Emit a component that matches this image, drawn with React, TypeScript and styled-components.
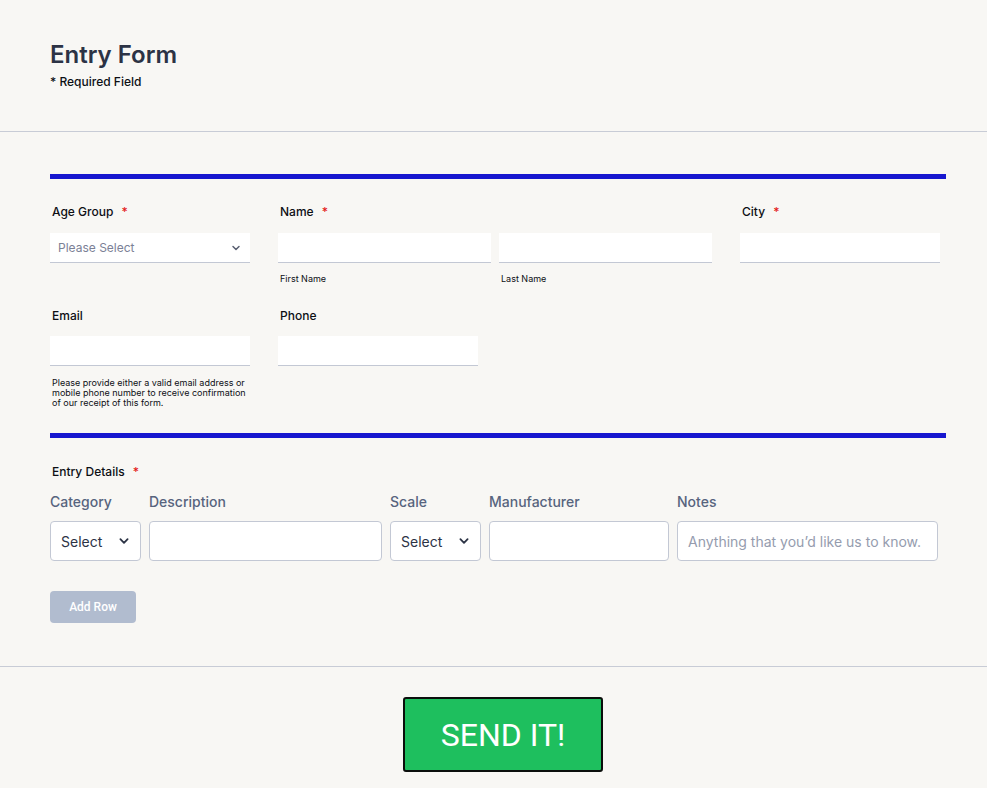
import styled, { createGlobalStyle } from "styled-components";

const GlobalStyle = createGlobalStyle`
  html, body {
    margin: 0;
    padding: 0;
    background: #f8f7f4;
  }
  body {
    font-family: Inter, "Noto Sans", sans-serif;
    color: #2c3345;
  }
  * {
    box-sizing: border-box;
  }
`;

const columns = [
  { label: "Category", width: 91, kind: "select" },
  { label: "Description", width: 233, kind: "text" },
  { label: "Scale", width: 91, kind: "select" },
  { label: "Manufacturer", width: 180, kind: "text" },
  { label: "Notes", width: 261, kind: "notes" },
];

const Chevron = ({ size = 10 }: { size?: number }) => (
  <svg width={size} height={size} viewBox="0 0 10 10" fill="none">
    <path d="M2 3.5 L5 6.5 L8 3.5" stroke="currentColor" strokeWidth="1.5" strokeLinecap="round" strokeLinejoin="round" />
  </svg>
);

const App = () => {
  return (
    <Page>
      <GlobalStyle />
      <Header>
        <Title>Entry Form</Title>
        <Subtitle>* Required Field</Subtitle>
      </Header>

      <FormBody>
        <SectionBar />
        <FieldRow>
          <Field $width={200}>
            <Label>
              Age Group <Star>*</Star>
            </Label>
            <FlatSelect>
              <span>Please Select</span>
              <Chevron />
            </FlatSelect>
          </Field>
          <Field $width={434}>
            <Label>
              Name <Star>*</Star>
            </Label>
            <NamePair>
              <div>
                <FlatInput />
                <SubLabel>First Name</SubLabel>
              </div>
              <div>
                <FlatInput />
                <SubLabel>Last Name</SubLabel>
              </div>
            </NamePair>
          </Field>
          <Field $width={200}>
            <Label>
              City <Star>*</Star>
            </Label>
            <FlatInput />
          </Field>
        </FieldRow>

        <FieldRow $top={23}>
          <Field $width={200}>
            <Label $gap={12}>Email</Label>
            <FlatInput />
            <HelpText>
              Please provide either a valid email address or mobile phone number to receive confirmation of our
              receipt of this form.
            </HelpText>
          </Field>
          <Field $width={200}>
            <Label $gap={12}>Phone</Label>
            <FlatInput />
          </Field>
        </FieldRow>

        <SectionBar $top={25} />

        <Label $top={26}>
          Entry Details <Star>*</Star>
        </Label>
        <Table>
          {columns.map((col) => (
            <Column key={col.label} $width={col.width}>
              <ColumnHead>{col.label}</ColumnHead>
              {col.kind === "select" ? (
                <BoxSelect>
                  <span>Select</span>
                  <Chevron size={12} />
                </BoxSelect>
              ) : (
                <BoxInput>{col.kind === "notes" && <Placeholder>Anything that you’d like us to know.</Placeholder>}</BoxInput>
              )}
            </Column>
          ))}
        </Table>
        <AddRowButton>Add Row</AddRowButton>
      </FormBody>

      <Footer>
        <SendButton>SEND IT!</SendButton>
      </Footer>
    </Page>
  );
};

export default App;

const Page = styled.div`
  width: 987px;
  min-height: 788px;
  background: #f8f7f4;
`;

const Header = styled.header`
  padding: 40px 50px 41px;
  border-bottom: 1px solid #c8ccd6;
`;

const Title = styled.h1`
  margin: 0;
  font-size: 24px;
  line-height: 30px;
  font-weight: 600;
  color: #2c3345;
`;

const Subtitle = styled.div`
  margin-top: 4px;
  font-size: 12px;
  line-height: 16px;
  font-weight: 500;
  color: #0d0f14;
`;

const FormBody = styled.section`
  padding: 42px 41px 43px 50px;
  border-bottom: 1px solid #c8ccd6;
`;

const SectionBar = styled.div<{ $top?: number }>`
  height: 5px;
  background: #1717cf;
  margin-top: ${(p) => p.$top ?? 0}px;
`;

const FieldRow = styled.div<{ $top?: number }>`
  display: flex;
  gap: 28px;
  margin-top: ${(p) => p.$top ?? 25}px;
`;

const Field = styled.div<{ $width: number }>`
  width: ${(p) => p.$width}px;
  display: flex;
  flex-direction: column;
`;

const Label = styled.div<{ $top?: number; $gap?: number }>`
  padding-left: 2px;
  margin-top: ${(p) => p.$top ?? 0}px;
  margin-bottom: ${(p) => p.$gap ?? 13}px;
  font-size: 12px;
  line-height: 16px;
  font-weight: 500;
  color: #0d0f14;
`;

const Star = styled.span`
  color: #e41b1b;
  margin-left: 5px;
`;

const FlatInput = styled.div`
  height: 30px;
  background: #ffffff;
  border-bottom: 1px solid #c3c8d4;
`;

const FlatSelect = styled(FlatInput)`
  display: flex;
  align-items: center;
  justify-content: space-between;
  padding: 0 9px 0 8px;
  font-size: 12px;
  color: #7b8196;

  svg {
    color: #5a6072;
  }
`;

const NamePair = styled.div`
  display: grid;
  grid-template-columns: 213px 213px;
  gap: 8px;
`;

const SubLabel = styled.div`
  margin-top: 10px;
  padding-left: 2px;
  font-size: 9px;
  line-height: 12px;
  color: #0d0f14;
`;

const HelpText = styled.div`
  margin-top: 12px;
  padding-left: 2px;
  font-size: 9px;
  line-height: 10px;
  color: #0d0f14;
`;

const Table = styled.div`
  display: flex;
  gap: 8px;
  margin-top: 10px;
`;

const Column = styled.div<{ $width: number }>`
  width: ${(p) => p.$width}px;
`;

const ColumnHead = styled.div`
  font-size: 14px;
  line-height: 18px;
  font-weight: 500;
  color: #57647e;
  margin-bottom: 10px;
`;

const BoxInput = styled.div`
  height: 40px;
  background: #ffffff;
  border: 1px solid #c3c8d4;
  border-radius: 4px;
  display: flex;
  align-items: center;
  padding: 0 10px;
`;

const BoxSelect = styled(BoxInput)`
  justify-content: space-between;
  font-size: 14px;
  color: #2c3345;

  svg {
    color: #2c3345;
  }
`;

const Placeholder = styled.span`
  font-size: 14px;
  color: #959cae;
  white-space: nowrap;
`;

const AddRowButton = styled.button`
  margin-top: 30px;
  width: 86px;
  height: 32px;
  border: none;
  border-radius: 4px;
  background: #b1bccf;
  color: #ffffff;
  font-family: Roboto, "Liberation Sans", sans-serif;
  font-size: 12px;
  font-weight: 500;
`;

const Footer = styled.footer`
  display: flex;
  justify-content: center;
  padding: 30px 0 15px 19px;
`;

const SendButton = styled.button`
  width: 200px;
  height: 75px;
  background: #1ebf5e;
  border: 2px solid #0b0f0c;
  border-radius: 3px;
  color: #ffffff;
  font-family: Roboto, "Liberation Sans", sans-serif;
  font-size: 32px;
  font-weight: 400;
`;
